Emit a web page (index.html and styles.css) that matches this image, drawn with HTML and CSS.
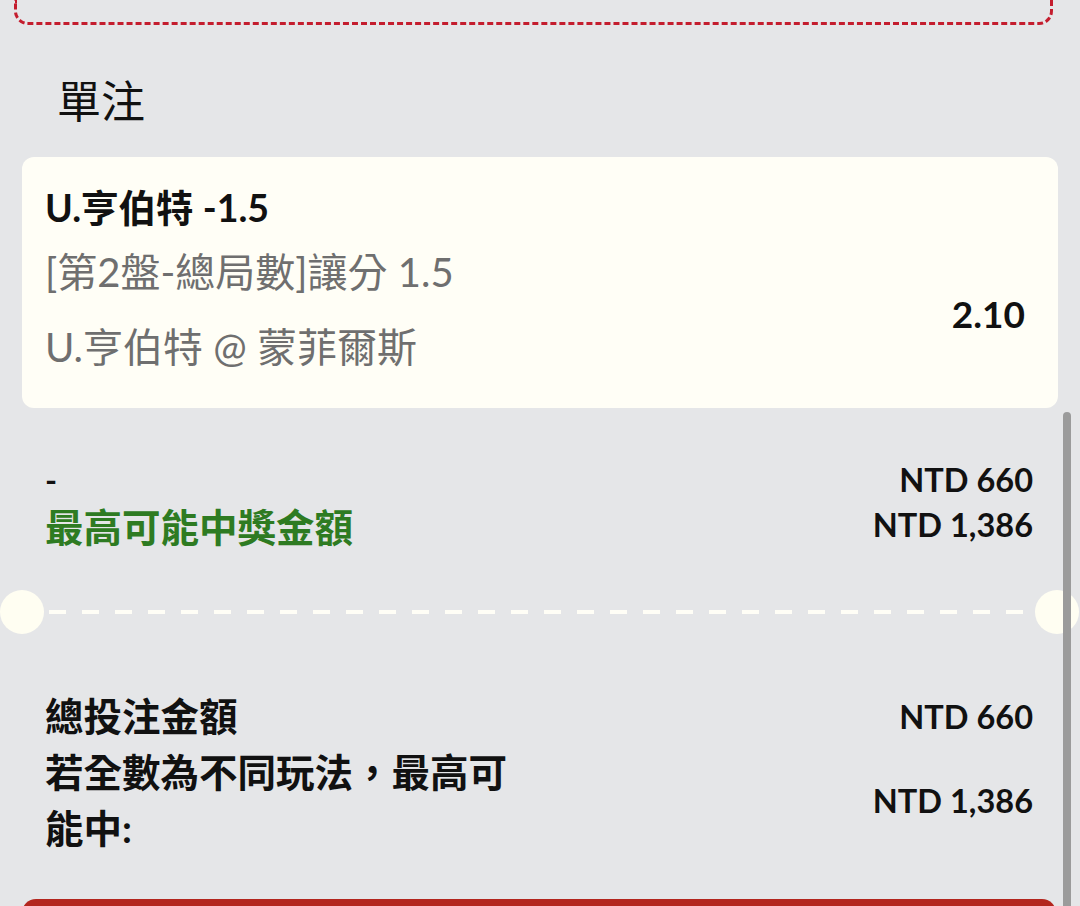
FILE: index.html
```html
<!DOCTYPE html>
<html lang="zh-Hant">

<head>
    <meta charset="UTF-8">
    <meta name="viewport" content="width=device-width, initial-scale=1.0">
    <title>投注單</title>
    <link rel="stylesheet" href="styles.css">
</head>

<body>
    <div class="page">
        <div class="promo-box"></div>

        <h2 class="section-title">單注</h2>

        <div class="bet-card">
            <div class="bet-name">U.亨伯特 -1.5</div>
            <div class="bet-body">
                <div class="bet-info">
                    <div class="bet-market">[第2盤-總局數]讓分 1.5</div>
                    <div class="bet-match">U.亨伯特 @ 蒙菲爾斯</div>
                </div>
                <div class="bet-odds">2.10</div>
            </div>
        </div>

        <div class="summary">
            <div class="summary-row">
                <span class="stake-label">-</span>
                <span class="amount">NTD 660</span>
            </div>
            <div class="summary-row">
                <span class="win-label">最高可能中獎金額</span>
                <span class="amount">NTD 1,386</span>
            </div>
        </div>

        <div class="ticket-divider">
            <span class="notch"></span>
            <span class="dashes"></span>
            <span class="notch"></span>
        </div>

        <div class="totals">
            <div class="total-row">
                <span class="total-label">總投注金額</span>
                <span class="amount">NTD 660</span>
            </div>
            <div class="total-row">
                <span class="total-label">若全數為不同玩法，最高可能中:</span>
                <span class="amount">NTD 1,386</span>
            </div>
        </div>

        <button class="place-bet" aria-label="投注"></button>

        <div class="scrollbar"></div>
    </div>
</body>

</html>
```

FILE: styles.css
```css
body {
    margin: 0;
    font-family: "Lato", "Noto Sans CJK TC", sans-serif;
    background-color: #e5e6e8;
    color: #111;
    overflow: hidden;
}

.page {
    position: relative;
    min-height: 906px;
}

.promo-box {
    height: 22px;
    margin: 0 27px 0 14px;
    border: 3px dashed #c41d2e;
    border-top: none;
    border-radius: 0 0 14px 14px;
}

.section-title {
    margin: 0;
    padding: 48px 0 28px 57px;
    font-size: 44px;
    font-weight: normal;
    line-height: 56px;
}

.bet-card {
    margin: 0 22px;
    padding: 26px 33px 23px 23px;
    background-color: #fffef6;
    border-radius: 12px;
}

.bet-name {
    font-size: 37.5px;
    font-weight: bold;
    line-height: 50px;
}

.bet-body {
    display: flex;
    justify-content: space-between;
    align-items: center;
}

.bet-market,
.bet-match {
    font-size: 40px;
    line-height: 75px;
    color: #6f6f6f;
}

.bet-market {
    margin-top: 2px;
}

.bet-odds {
    margin-top: 8px;
    font-size: 37px;
    font-weight: bold;
}

.summary {
    margin-top: 49px;
    padding: 0 47px 0 45px;
}

.summary-row {
    display: flex;
    justify-content: space-between;
    align-items: center;
    height: 45px;
}

.stake-label {
    font-size: 32.5px;
    font-weight: bold;
}

.win-label {
    font-size: 38.5px;
    font-weight: bold;
    color: #2e7b22;
}

.amount {
    font-size: 32.5px;
    font-weight: bold;
}

.ticket-divider {
    display: flex;
    align-items: center;
    margin-top: 43px;
    padding: 0 1px 0 0;
}

.notch {
    width: 44px;
    height: 44px;
    border-radius: 50%;
    background-color: #fffef2;
    flex-shrink: 0;
}

.dashes {
    flex: 1;
    height: 4px;
    margin: 0 4px 0 5px;
    background: repeating-linear-gradient(90deg, #fffef6 0 17px, transparent 17px 33px);
}

.totals {
    margin-top: 54px;
    padding: 0 47px 0 45px;
}

.total-row {
    display: flex;
    justify-content: space-between;
    align-items: center;
}

.total-label {
    width: 470px;
    font-size: 38.5px;
    font-weight: bold;
    line-height: 56px;
}

.place-bet {
    display: block;
    width: 1034px;
    height: 110px;
    margin: 43px 0 0 22px;
    border: none;
    border-radius: 14px;
    background-color: #b3261e;
}

.scrollbar {
    position: absolute;
    top: 412px;
    left: 1063px;
    width: 8px;
    height: 520px;
    border-radius: 4px;
    background-color: #9b9b9b;
}
```
